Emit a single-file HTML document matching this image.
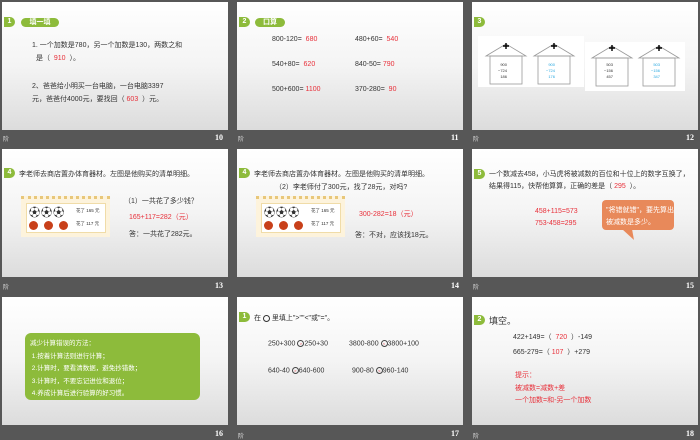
<!DOCTYPE html><html><head><meta charset="utf-8"><style>
*{margin:0;padding:0;box-sizing:border-box}
body{width:700px;height:438px;background:#575757;position:relative;overflow:hidden;font-family:"Liberation Sans","Noto Sans CJK SC",sans-serif;color:#333}
.s{position:absolute;width:226px;height:128px;background:linear-gradient(#fff 0%,#f4f4f4 50%,#dcdcdc 100%);overflow:hidden}
.t{position:absolute;font-size:7px;white-space:nowrap;color:#333}
.r{color:#e8303a}
.n{position:absolute;font-size:8px;color:#fff;font-weight:bold;font-family:"Liberation Serif",serif}
.f{position:absolute;font-size:6px;color:#ddd}
.b{position:absolute;width:11px;height:10px;background:#8dbb3b;border-radius:0 6px 6px 0;color:#fff;font-size:7px;font-weight:bold;text-align:center;line-height:10px}
.p{position:absolute;height:9px;background:#8dbb3b;border-radius:5px;color:#fff;font-size:7px;font-weight:bold;text-align:center;line-height:9px}
.c{display:inline-block;width:7px;height:7px;border:1px solid #444;border-radius:50%;vertical-align:middle;font-size:4px;color:#e8303a;text-align:center;line-height:5px}
</style></head><body>
<!-- row1 -->
<div class="s" style="left:2px;top:2px">
<div class="b" style="left:2px;top:15px">1</div><div class="p" style="left:19px;top:16px;width:38px">填一填</div>
<div class="t" style="left:30px;top:38px">1. 一个加数是780，另一个加数是130，两数之和</div>
<div class="t" style="left:34px;top:51px">是（ &nbsp;<span class="r">910</span> &nbsp;）。</div>
<div class="t" style="left:30px;top:79px">2、爸爸给小明买一台电脑，一台电脑3397</div>
<div class="t" style="left:30px;top:92px">元，爸爸付4000元，要找回（ <span class="r">603</span> &nbsp;）元。</div>
</div>
<div class="s" style="left:237px;top:2px">
<div class="b" style="left:2px;top:15px">2</div><div class="p" style="left:18px;top:16px;width:30px">口算</div>
<div class="t" style="left:35px;top:34px">800-120= &nbsp;<span class="r">680</span></div>
<div class="t" style="left:35px;top:59px">540+80= &nbsp;<span class="r">620</span></div>
<div class="t" style="left:35px;top:84px">500+600= <span class="r">1100</span></div>
<div class="t" style="left:118px;top:34px">480+60= &nbsp;<span class="r">540</span></div>
<div class="t" style="left:118px;top:59px">840-50= <span class="r">790</span></div>
<div class="t" style="left:118px;top:84px">370-280= &nbsp;<span class="r">90</span></div>
</div>
<div class="s" style="left:472px;top:2px">
<div class="b" style="left:2px;top:15px">3</div>
<div style="position:absolute;left:6px;top:34px;width:106px;height:51px;background:#fff"></div>
<div style="position:absolute;left:113px;top:40px;width:100px;height:49px;background:#fff"></div>
<svg style="position:absolute;left:0;top:0" width="226" height="128" fill="none" stroke="#999" stroke-width="0.8">
<g><path d="M14 54 L34 42 L54 54 Z"/><rect x="18" y="54" width="32" height="28"/><path d="M34 41v6M31 44h6" stroke="#000" stroke-width="1.4"/></g>
<g><path d="M62 54 L82 42 L102 54 Z"/><rect x="66" y="54" width="32" height="28"/><path d="M82 41v6M79 44h6" stroke="#000" stroke-width="1.4"/></g>
<g><path d="M120 56 L140 44 L160 56 Z"/><rect x="124" y="56" width="32" height="28"/><path d="M140 43v6M137 46h6" stroke="#000" stroke-width="1.4"/></g>
<g><path d="M167 56 L187 44 L207 56 Z"/><rect x="171" y="56" width="32" height="28"/><path d="M187 43v6M184 46h6" stroke="#000" stroke-width="1.4"/></g>
</svg>
<div class="t" style="left:26px;top:60px;font-size:4px;line-height:6px;text-align:right">900<br>−724<br>186</div>
<div class="t" style="left:74px;top:60px;font-size:4px;line-height:6px;color:#29a8e0;text-align:right">900<br>−724<br>176</div>
<div class="t" style="left:132px;top:60px;font-size:4px;line-height:6px;text-align:right">503<br>−156<br>457</div>
<div class="t" style="left:179px;top:60px;font-size:4px;line-height:6px;color:#29a8e0;text-align:right">503<br>−156<br>347</div>
</div>
<div class="f" style="left:3px;top:134px">阶</div><div class="n" style="left:215px;top:133px">10</div>
<div class="f" style="left:238px;top:134px">阶</div><div class="n" style="left:451px;top:133px">11</div>
<div class="f" style="left:473px;top:134px">阶</div><div class="n" style="left:686px;top:133px">12</div>
<!-- row2 -->
<div class="s" style="left:2px;top:149px">
<div class="b" style="left:2px;top:19px">4</div>
<div class="t" style="left:17px;top:20px">李老师去商店置办体育器材。左图是他购买的清单明细。</div>
<div style="position:absolute;left:19px;top:47px;width:89px;height:41px;background:#fdf3dc;border-top:3px dotted #e8c77a"></div>
<div style="position:absolute;left:24px;top:54px;width:80px;height:30px;background:#fff;border:1px solid #f0dca8"></div>
<div class="t" style="left:27px;top:55px;font-size:11px;letter-spacing:-1px">⚽ ⚽ ⚽</div>
<div style="position:absolute;left:27px;top:72px;width:9px;height:9px;border-radius:50%;background:#c8401a"></div>
<div style="position:absolute;left:42px;top:72px;width:9px;height:9px;border-radius:50%;background:#c8401a"></div>
<div style="position:absolute;left:57px;top:72px;width:9px;height:9px;border-radius:50%;background:#c8401a"></div>
<div class="t" style="left:74px;top:59px;font-size:4.5px">花了 165 元</div>
<div class="t" style="left:74px;top:72px;font-size:4.5px">花了 117 元</div>
<div class="t" style="left:122px;top:47px">（1）一共花了多少钱？</div>
<div class="t r" style="left:127px;top:63px">165+117=282（元）</div>
<div class="t" style="left:127px;top:80px">答：一共花了282元。</div>
</div>
<div class="s" style="left:237px;top:149px">
<div class="b" style="left:2px;top:19px">4</div>
<div class="t" style="left:17px;top:20px">李老师去商店置办体育器材。左图是他购买的清单明细。</div>
<div class="t" style="left:38px;top:33px">（2）李老师付了300元，找了28元，对吗?</div>
<div style="position:absolute;left:19px;top:47px;width:89px;height:41px;background:#fdf3dc;border-top:3px dotted #e8c77a"></div>
<div style="position:absolute;left:24px;top:54px;width:80px;height:30px;background:#fff;border:1px solid #f0dca8"></div>
<div class="t" style="left:27px;top:55px;font-size:11px;letter-spacing:-1px">⚽ ⚽ ⚽</div>
<div style="position:absolute;left:27px;top:72px;width:9px;height:9px;border-radius:50%;background:#c8401a"></div>
<div style="position:absolute;left:42px;top:72px;width:9px;height:9px;border-radius:50%;background:#c8401a"></div>
<div style="position:absolute;left:57px;top:72px;width:9px;height:9px;border-radius:50%;background:#c8401a"></div>
<div class="t" style="left:74px;top:59px;font-size:4.5px">花了 165 元</div>
<div class="t" style="left:74px;top:72px;font-size:4.5px">花了 117 元</div>
<div class="t r" style="left:122px;top:60px">300-282=18（元）</div>
<div class="t" style="left:118px;top:81px">答：不对，应该找18元。</div>
</div>
<div class="s" style="left:472px;top:149px">
<div class="b" style="left:2px;top:20px">5</div>
<div class="t" style="left:17px;top:20px">一个数减去458，小马虎将被减数的百位和十位上的数字互换了，</div>
<div class="t" style="left:17px;top:32px">结果得115，快帮他算算，正确的差是（ <span class="r">295</span> &nbsp;）。</div>
<div class="t r" style="left:63px;top:59px">458+115=573</div>
<div class="t r" style="left:63px;top:71px">753-458=295</div>
<div style="position:absolute;left:130px;top:51px;width:72px;height:30px;background:#e8895a;border-radius:4px"></div>
<svg style="position:absolute;left:0;top:0" width="226" height="128"><path d="M150 80 L162 91 L160 80Z" fill="#e8895a"/></svg>
<div class="t" style="left:134px;top:56px;color:#fff">"将错就错"，要先算出</div>
<div class="t" style="left:134px;top:68px;color:#fff">被减数是多少。</div>
</div>
<div class="f" style="left:3px;top:282px">阶</div><div class="n" style="left:215px;top:281px">13</div>
<div class="n" style="left:451px;top:281px">14</div>
<div class="f" style="left:473px;top:282px">阶</div><div class="n" style="left:686px;top:281px">15</div>
<!-- row3 -->
<div class="s" style="left:2px;top:297px">
<div style="position:absolute;left:23px;top:36px;width:175px;height:67px;background:#8dbb3b;border-radius:6px"></div>
<div class="t" style="left:28px;top:41px;color:#fff;line-height:12.5px;font-size:6.5px">减少计算错误的方法：<br>&nbsp;1.按着计算法则进行计算；<br>&nbsp;2.计算时，要看清数据，避免抄错数；<br>&nbsp;3.计算时，不要忘记进位和退位；<br>&nbsp;4.养成计算后进行验算的好习惯。</div>
</div>
<div class="s" style="left:237px;top:297px">
<div class="b" style="left:2px;top:15px">1</div>
<div class="t" style="left:17px;top:16px">在 <span class="c" style="border-color:#333"></span> 里填上"&gt;""&lt;"或"="。</div>
<div class="t" style="left:31px;top:43px">250+300 <span class="c">&gt;</span>250+30</div>
<div class="t" style="left:31px;top:70px">640-40 <span class="c">&gt;</span>640-600</div>
<div class="t" style="left:112px;top:43px">3800-800 <span class="c">&lt;</span>3800+100</div>
<div class="t" style="left:115px;top:70px">900-80 <span class="c">&lt;</span>960-140</div>
</div>
<div class="s" style="left:472px;top:297px">
<div class="b" style="left:2px;top:18px">2</div>
<div class="t" style="left:17px;top:17px;font-size:9px">填空。</div>
<div class="t" style="left:41px;top:35px">422+149=（ &nbsp;<span class="r">720</span> &nbsp;）-149</div>
<div class="t" style="left:41px;top:50px">665-279=（ <span class="r">107</span> &nbsp;）+279</div>
<div class="t r" style="left:43px;top:73px;line-height:12.5px">提示：<br>被减数=减数+差<br>一个加数=和-另一个加数</div>
</div>
<div class="n" style="left:215px;top:429px">16</div>
<div class="f" style="left:238px;top:431px">阶</div><div class="n" style="left:451px;top:429px">17</div>
<div class="f" style="left:473px;top:431px">阶</div><div class="n" style="left:686px;top:429px">18</div>
</body></html>
